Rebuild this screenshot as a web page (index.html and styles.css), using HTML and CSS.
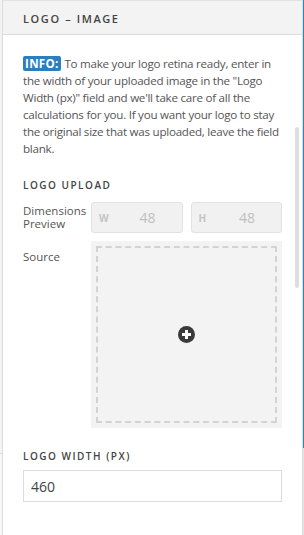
FILE: index.html
```html
<html>
    <head>
        <link rel="stylesheet" href="styles.css">
    </head>
    <body>
        <div class="frame">
            <div class="edgeLeft"></div>
            <div class="panel">
                <div class="panelHeader">Logo &ndash; Image</div>
                <div class="panelBody">
                    <p class="info"><span class="infoBadge">INFO:</span> To make your logo retina ready, enter in the width of your uploaded image in the "Logo Width (px)" field and we'll take care of all the calculations for you. If you want your logo to stay the original size that was uploaded, leave the field blank.</p>

                    <h3 class="sectionTitle">Logo Upload</h3>
                    <div class="fieldRow">
                        <label>Dimensions Preview</label>
                        <div class="dims">
                            <div class="dimBox"><span class="dimKey">W</span><span class="dimVal">48</span></div>
                            <div class="dimBox"><span class="dimKey">H</span><span class="dimVal">48</span></div>
                        </div>
                    </div>
                    <div class="fieldRow">
                        <label class="sourceLabel">Source</label>
                        <div class="source">
                            <div class="dropZone">
                                <svg width="17" height="17" viewBox="0 0 17 17">
                                    <circle cx="8.5" cy="8.5" r="8.5" fill="#3a3a3a"/>
                                    <rect x="4" y="7" width="9" height="3" fill="#fff"/>
                                    <rect x="7" y="4" width="3" height="9" fill="#fff"/>
                                </svg>
                            </div>
                        </div>
                    </div>

                    <h3 class="sectionTitle widthTitle">Logo Width (px)</h3>
                    <input class="widthInput" type="text" value="460">
                </div>
                <div class="scrollbar"></div>
            </div>
            <div class="edgeRight"></div>
        </div>
    </body>
</html>
```
FILE: styles.css
```css
body {
    margin: 0;
    background: #fff;
    font-family: "Open Sans", sans-serif;
}
.frame {
    display: flex;
    height: 535px;
}
.edgeLeft {
    width: 2px;
    background: linear-gradient(#f3f3f3 0, #f3f3f3 453px, #dcdcdc 453px, #dcdcdc 454px, #f7f7f7 454px);
}
.edgeRight {
    width: 1px;
    background: linear-gradient(#1e8cbe 0, #1e8cbe 448px, #e4e4e4 448px);
}
.panel {
    flex: 1;
    position: relative;
    border-left: 1px solid #dcdcdc;
    border-right: 1px solid #dcdcdc;
    background: #fff;
}
.panelHeader {
    height: 35px;
    box-sizing: border-box;
    border-top: 1px solid #e2e2e2;
    border-bottom: 1px solid #dcdcdc;
    background: #f3f3f3;
    padding: 10px 20px 0;
    font-size: 11px;
    font-weight: 600;
    letter-spacing: 1.6px;
    text-transform: uppercase;
    color: #444;
}
.panelBody {
    padding: 20px 20px 0;
}
.info {
    margin: 0;
    font-size: 11.6px;
    line-height: 17px;
    letter-spacing: -0.25px;
    color: #555;
}
.infoBadge {
    display: inline-block;
    line-height: 15px;
    background: #2b7fbd;
    color: #fff;
    font-weight: 700;
    padding: 0 2px;
    margin-right: 1px;
    border-radius: 2px;
    letter-spacing: 0.3px;
}
.sectionTitle {
    margin: 21px 0 10px;
    font-size: 10px;
    font-weight: 600;
    letter-spacing: 1.5px;
    text-transform: uppercase;
    color: #444;
}
.fieldRow {
    display: grid;
    grid-template-columns: 68px 1fr;
    margin-bottom: 8px;
}
.fieldRow > label {
    font-size: 11.5px;
    line-height: 13px;
    color: #555;
    padding-top: 2px;
}
.fieldRow > .sourceLabel {
    padding-top: 9px;
}
.dims {
    display: grid;
    grid-template-columns: 1fr 1fr;
    grid-gap: 8px;
}
.dimBox {
    display: flex;
    align-items: center;
    justify-content: space-between;
    height: 31px;
    box-sizing: border-box;
    padding: 0 12px 0 7px;
    background: #f1f1f1;
    border: 1px solid #e2e2e2;
    border-radius: 3px;
}
.dimKey {
    font-size: 10px;
    font-weight: 700;
    color: #c4c4c4;
}
.dimVal {
    font-size: 14px;
    color: #c0c0c0;
    padding-right: 14px;
}
.source {
    height: 187px;
    padding: 5px;
    box-sizing: border-box;
    background: #f3f3f3;
}
.dropZone {
    height: 100%;
    box-sizing: border-box;
    border: 2px dashed #d3d3d3;
    display: flex;
    align-items: center;
    justify-content: center;
}
.widthTitle {
    margin-top: 21px;
    margin-bottom: 7px;
}
.widthInput {
    width: 100%;
    height: 32px;
    box-sizing: border-box;
    border: 1px solid #dcdcdc;
    padding: 0 7px;
    font-family: inherit;
    font-size: 14px;
    color: #444;
    outline: none;
}
.scrollbar {
    position: absolute;
    right: 3px;
    top: 127px;
    width: 4px;
    height: 161px;
    background: #dedede;
    border-radius: 2px;
}
```
